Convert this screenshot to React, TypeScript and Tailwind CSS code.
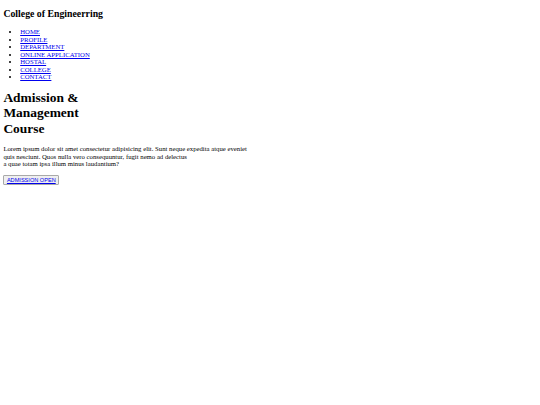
const links = ["HOME", "PROFILE", "DEPARTMENT", "ONLINE APPLICATION", "HOSTAL", "COLLEGE", "CONTACT"];

export default function App() {
  return (
    <div className="min-h-[405px] bg-white px-[3.4px] pt-0 text-black text-[6.72px] leading-[7.5px]" style={{ fontFamily: '"Liberation Serif", "Times New Roman", serif' }}>
      <header>
        <h2 className="mt-[7.6px] mb-[9.4px] text-[9.8px] font-bold leading-[1.15]">College of Engineerring</h2>
        <ul className="my-[6.7px] list-disc pl-[16.8px]">
          {links.map((l) => (
            <li key={l}>
              <a href="#" className="text-[#0000ee] underline">{l}</a>
            </li>
          ))}
        </ul>
      </header>
      <section>
        <h1 className="my-[9px] text-[13.44px] font-bold leading-[15.5px]">
          Admission &amp;<br />Management<br />Course
        </h1>
        <p className="mt-[8px] mb-[7.4px]">
          Lorem ipsum dolor sit amet consectetur adipisicing elit. Sunt neque expedita atque eveniet<br />
          quis nesciunt. Quos nulla vero consequuntur, fugit nemo ad delectus<br />
          a quae totam ipsa illum minus laudantium?
        </p>
        <button className="border border-[#a9a9a9] bg-[#efefef] px-[2.5px] py-[0.5px] text-[5.6px] leading-[1.15] rounded-[1px]" style={{ fontFamily: '"Liberation Sans", Arial, sans-serif' }}>
          <a href="#" className="text-[#0000ee] underline">ADMISSION OPEN</a>
        </button>
      </section>
    </div>
  );
}
